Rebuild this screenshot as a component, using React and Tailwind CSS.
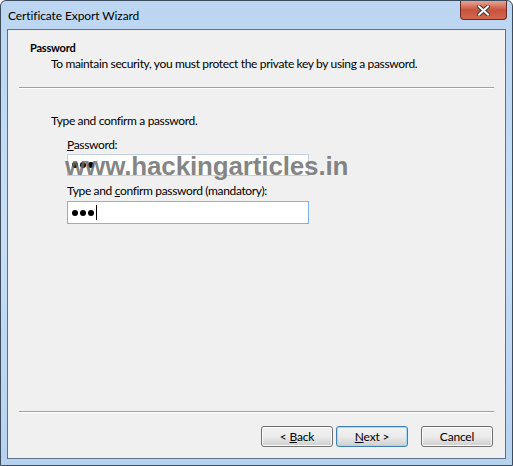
import React from 'react';

const font = { fontFamily: '"Segoe UI", Lato, "Noto Sans", sans-serif' };

const Button = ({ children, focused }) => (
  <button
    className={`h-[21px] w-[72px] rounded-[3px] border text-[12px] tracking-[-0.2px] text-black bg-gradient-to-b from-[#f2f2f2] via-[#ebebeb] to-[#cfcfcf] ${
      focused ? 'border-[#3c7fb1] shadow-[inset_0_0_0_1px_#a6d8f7]' : 'border-[#707070] shadow-[inset_0_0_0_1px_#fcfcfc]'
    }`}
  >
    {children}
  </button>
);

const Dots = () => (
  <div className="flex gap-[2px]">
    <span className="w-[6px] h-[6px] rounded-full bg-black" />
    <span className="w-[6px] h-[6px] rounded-full bg-black" />
    <span className="w-[6px] h-[6px] rounded-full bg-black" />
  </div>
);

export default function App() {
  return (
    <div className="w-[513px] h-[466px] bg-white" style={font}>
      <div className="w-[513px] h-[466px] flex flex-col rounded-t-[6px] border border-[#3a4c5e] bg-gradient-to-b from-[#bcd6f1] via-[#c7def5] to-[#b6d2ef] px-[6px] pb-[6px]">
        {/* title bar */}
        <div className="h-[28px] flex items-center justify-between">
          <span className="text-[12px] tracking-[-0.1px] text-black pl-[1px] pt-[1px]">Certificate Export Wizard</span>
          <div className="self-start w-[47px] h-[19px] -mr-[1px] rounded-b-[4px] border border-[#6b2a23] border-t-0 bg-gradient-to-b from-[#e7a493] via-[#c9523d] to-[#d0674e] flex items-center justify-center">
            <svg width="13" height="11" viewBox="0 0 13 11">
              <path d="M2 1.5 L11 9.5 M11 1.5 L2 9.5" stroke="#3b3b3b" strokeWidth="4" strokeLinecap="square" />
              <path d="M2 1.5 L11 9.5 M11 1.5 L2 9.5" stroke="#ffffff" strokeWidth="2" strokeLinecap="square" />
            </svg>
          </div>
        </div>

        {/* client area */}
        <div className="flex-1 flex flex-col border border-[#5d7187] bg-[#f0f0f0] text-[12px] tracking-[-0.35px]">
          <div className="h-[57px] pt-[10px] pl-[22px]">
            <div className="text-[11px] tracking-[-0.2px] font-bold text-black leading-[15px]">Password</div>
            <div className="text-black leading-[17px] pl-[21px]">
              To maintain security, you must protect the private key by using a password.
            </div>
          </div>
          <div className="mx-[11px] h-[2px] border-t border-[#a0a0a0] border-b border-b-white" />

          <div className="relative flex-1 flex flex-col pl-[43px] pt-[24px]">
            <div className="leading-[16px] text-black">Type and confirm a password.</div>
            <div className="pl-[16px] pt-[8px] flex flex-col">
              <div className="leading-[16px] text-black">
                <u>P</u>assword:
              </div>
              <div className="mt-[1px] w-[242px] h-[22px] border border-[#c5d0dc] bg-white flex items-center pl-[4px]">
                <Dots />
              </div>
              <div className="leading-[16px] text-black mt-[7px]">
                Type and <u>c</u>onfirm password (mandatory):
              </div>
              <div className="mt-[2px] w-[242px] h-[23px] border border-[#7eb4ea] bg-white flex items-center pl-[4px]">
                <Dots />
                <span className="ml-[2px] inline-block w-[1px] h-[15px] bg-black" />
              </div>
            </div>

            <div
              className="absolute left-[57px] top-[64px] text-[26px] font-bold text-[#6f6f6f]/85 tracking-[-0.15px] leading-none"
              style={{ fontFamily: '"Liberation Sans", Arial, sans-serif' }}
            >
              www.hackingarticles.in
            </div>
          </div>

          <div className="mx-[11px] h-[2px] border-t border-[#a0a0a0] border-b border-b-white" />
          <div className="h-[45px] flex items-start justify-end pr-[12px] pt-[13px]">
            <Button>&lt; <u>B</u>ack</Button>
            <div className="w-[3px]" />
            <Button focused>
              <u>N</u>ext &gt;
            </Button>
            <div className="w-[13px]" />
            <Button>Cancel</Button>
          </div>
        </div>
      </div>
    </div>
  );
}
